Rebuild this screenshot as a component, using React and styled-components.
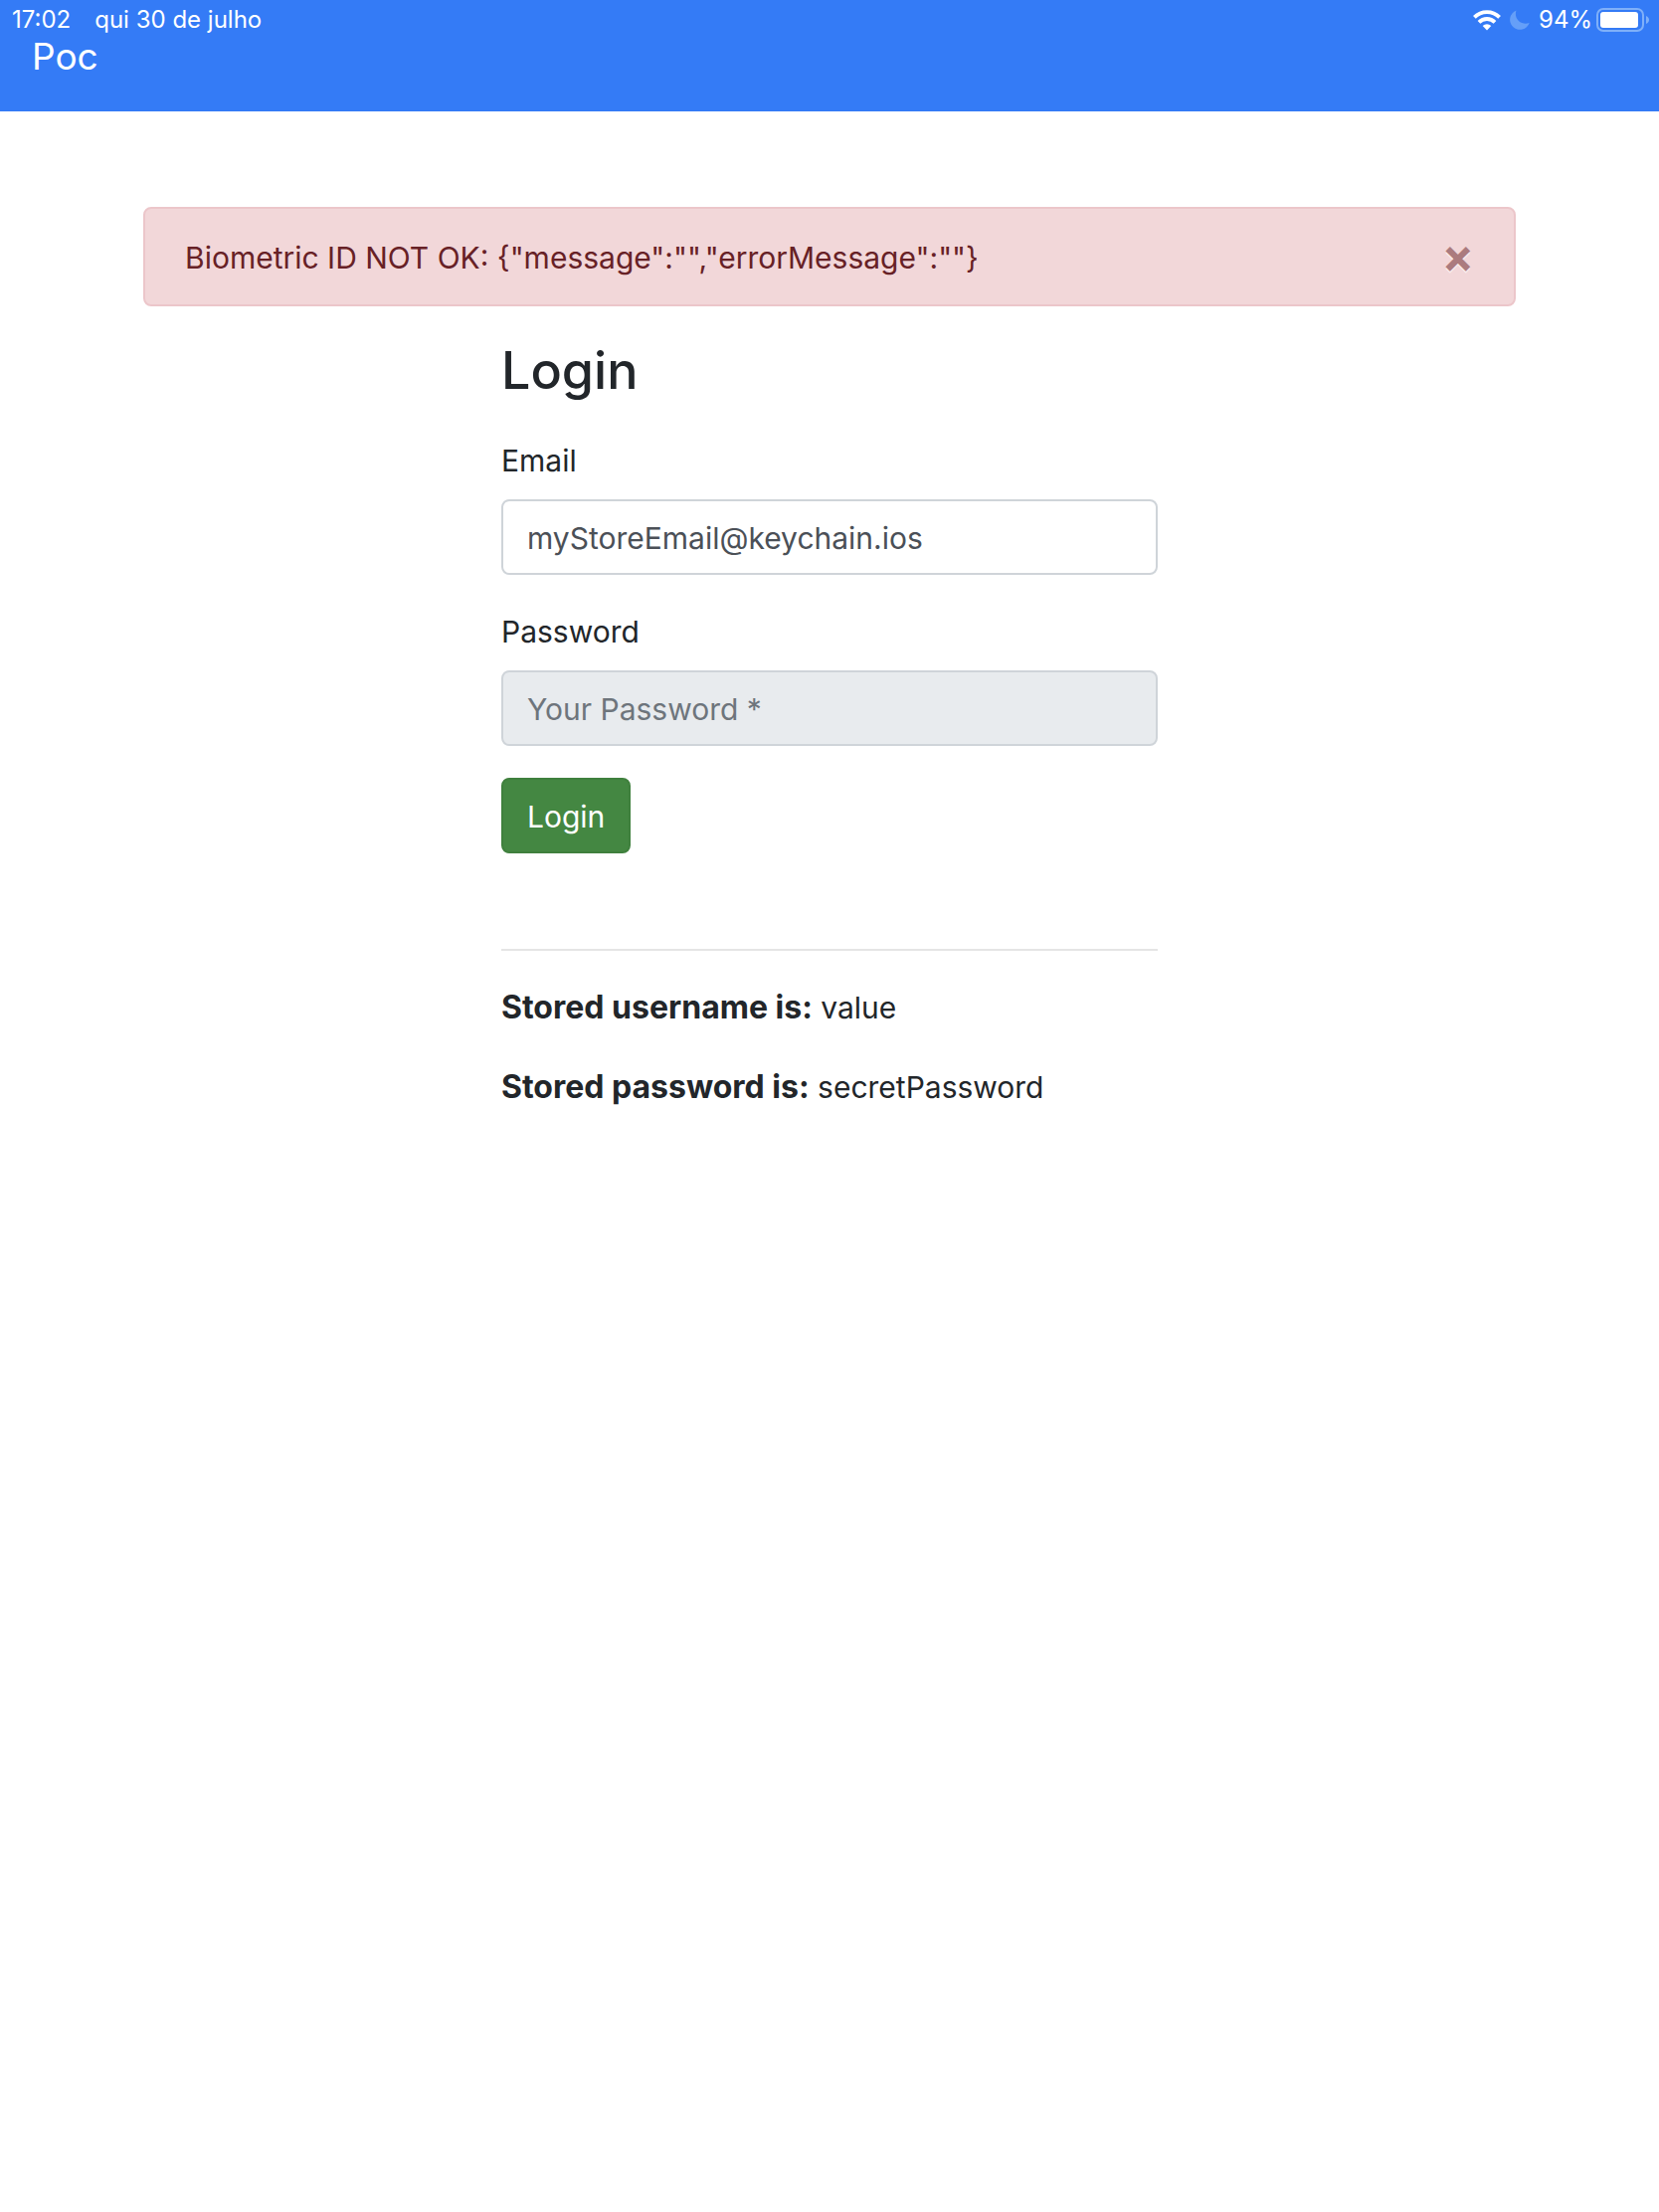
import React, { useState } from "react";
import styled, { createGlobalStyle } from "styled-components";

const GlobalStyle = createGlobalStyle`
  *, *::before, *::after { box-sizing: border-box; }
  body {
    margin: 0;
    background: #fff;
    color: #22262a;
    font-family: Inter, "Liberation Sans", sans-serif;
    font-size: 30px;
    line-height: 50px;
  }
`;

const Header = styled.header`
  background: #347bf6;
  color: #fff;
  min-height: 112px;
`;

const StatusBar = styled.div`
  display: flex;
  align-items: center;
  justify-content: space-between;
  height: 40px;
  padding: 0 10px 0 12px;
  font-size: 24px;
  line-height: 40px;
`;

const StatusGroup = styled.div`
  display: flex;
  align-items: center;
  gap: ${(p) => p.$gap}px;
`;

const Indicators = styled.div`
  display: flex;
  align-items: center;
  gap: 9px;
`;

const Navbar = styled.nav`
  display: flex;
  padding: 0 32px;
`;

const Brand = styled.a`
  color: #fff;
  font-size: 37px;
  line-height: 34px;
  text-decoration: none;
`;

const Container = styled.main`
  max-width: 1440px;
  margin: 0 auto;
  padding: 96px 30px 32px;
`;

const Alert = styled.div`
  display: flex;
  align-items: center;
  justify-content: space-between;
  min-height: 100px;
  margin-bottom: 32px;
  padding: 24px 40px 22px;
  border: 2px solid #ecc6ca;
  border-radius: 8px;
  background: #f2d7d9;
  color: #672126;
`;

const CloseButton = styled.button`
  padding: 0 0 4px;
  border: 0;
  background: none;
  color: inherit;
  font: inherit;
  font-size: 48px;
  font-weight: 700;
  line-height: 46px;
  text-shadow: 0 2px 0 #fff;
  opacity: 0.5;
  cursor: pointer;
`;

const Column = styled.section`
  width: 50%;
  min-width: 480px;
  margin: 0 auto;
  @media (min-width: 1200px) {
    width: 660px;
  }
`;

const Title = styled.h3`
  margin: 0 0 32px;
  font-size: 52px;
  font-weight: 500;
  line-height: 66px;
`;

const Field = styled.div`
  display: flex;
  flex-direction: column;
  gap: 14px;
  margin-bottom: 32px;
`;

const TextInput = styled.input`
  width: 100%;
  padding: 12px 24px 10px;
  border: 2px solid #cfd4d9;
  border-radius: 8px;
  background: #fff;
  color: #4b5057;
  font: inherit;
  &:disabled {
    background: #e8ebee;
  }
  &::placeholder {
    color: #6e757c;
    opacity: 1;
  }
`;

const SubmitButton = styled.button`
  padding: 12px 24px 10px;
  border: 2px solid #3f803d;
  border-radius: 8px;
  background: #448742;
  color: #fff;
  font: inherit;
  cursor: pointer;
`;

const Divider = styled.hr`
  margin: 96px 0 32px;
  border: 0;
  border-top: 2px solid #e5e5e5;
`;

const Stored = styled.p`
  margin: 0 0 30px;
  strong {
    font-size: 32px;
  }
`;

const WifiIcon = () => (
  <svg width="28" height="21" viewBox="0 0 28 21" fill="none" stroke="#fff" strokeWidth="3.8" aria-hidden="true">
    <path d="M1.4 7.4a17.6 17.6 0 0 1 25.2 0" />
    <path d="M6 12.3a11.3 11.3 0 0 1 16 0" />
    <path d="M14 20.5l-4.3-4.4a6.2 6.2 0 0 1 8.6 0z" fill="#fff" stroke="none" />
  </svg>
);

const MoonIcon = () => (
  <svg width="20" height="20" viewBox="0 0 20 20" aria-hidden="true">
    <path d="M6.5 0.5A10 10 0 1 0 19.6 13C12 16 3.5 9 6.5 0.5z" fill="#659ff8" />
  </svg>
);

const BatteryIcon = () => (
  <svg width="53" height="24" viewBox="0 0 53 24" aria-hidden="true">
    <rect x="1" y="1" width="46" height="22" rx="6" fill="none" stroke="#7fb0f9" strokeWidth="2" />
    <rect x="4" y="4" width="38" height="16" rx="3" fill="#fff" />
    <path d="M50 8c4 1.4 4 6.6 0 8z" fill="#7fb0f9" />
  </svg>
);

export default function App() {
  const [alertOpen, setAlertOpen] = useState(true);
  const [email, setEmail] = useState("myStoreEmail@keychain.ios");

  return (
    <>
      <GlobalStyle />
      <Header>
        <StatusBar>
          <StatusGroup $gap={24}>
            <time>17:02</time>
            <span>qui 30 de julho</span>
          </StatusGroup>
          <StatusGroup $gap={4}>
            <Indicators>
              <WifiIcon />
              <MoonIcon />
              <span>94%</span>
            </Indicators>
            <BatteryIcon />
          </StatusGroup>
        </StatusBar>
        <Navbar>
          <Brand href="#">Poc</Brand>
        </Navbar>
      </Header>
      <Container>
        {alertOpen && (
          <Alert role="alert">
            <span>{'Biometric ID NOT OK: {"message":"","errorMessage":""}'}</span>
            <CloseButton type="button" aria-label="Close" onClick={() => setAlertOpen(false)}>
              ×
            </CloseButton>
          </Alert>
        )}
        <Column>
          <form onSubmit={(e) => e.preventDefault()}>
            <Title>Login</Title>
            <Field>
              <label htmlFor="email">Email</label>
              <TextInput id="email" type="email" value={email} onChange={(e) => setEmail(e.target.value)} />
            </Field>
            <Field>
              <label htmlFor="password">Password</label>
              <TextInput id="password" type="password" placeholder="Your Password *" disabled />
            </Field>
            <SubmitButton type="submit">Login</SubmitButton>
          </form>
          <Divider />
          <Stored>
            <strong>Stored username is:</strong> value
          </Stored>
          <Stored>
            <strong>Stored password is:</strong> secretPassword
          </Stored>
        </Column>
      </Container>
    </>
  );
}
